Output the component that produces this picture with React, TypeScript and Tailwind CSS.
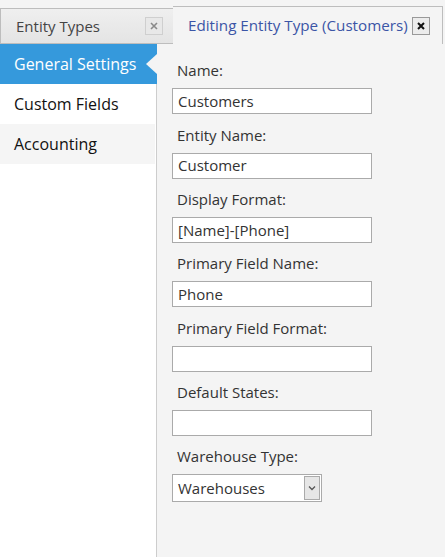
import React from 'react';

const fields = [
  { label: 'Name:', value: 'Customers' },
  { label: 'Entity Name:', value: 'Customer' },
  { label: 'Display Format:', value: '[Name]-[Phone]' },
  { label: 'Primary Field Name:', value: 'Phone' },
  { label: 'Primary Field Format:', value: '' },
  { label: 'Default States:', value: '' },
];

const menu = ['General Settings', 'Custom Fields', 'Accounting'];

function CloseBox({ active }: { active?: boolean }) {
  return (
    <div
      className={`w-[18px] h-[18px] flex items-center justify-center border ${
        active ? 'border-[#999] bg-[#ececec]' : 'border-[#cfcfcf] bg-[#e8e8e8]'
      }`}
    >
      <svg width="8" height="8" viewBox="0 0 8 8">
        <path
          d="M1 1 L7 7 M7 1 L1 7"
          stroke={active ? '#111' : '#8a8a8a'}
          strokeWidth={active ? 2 : 1.6}
        />
      </svg>
    </div>
  );
}

export default function App() {
  return (
    <div className="w-[445px] h-[557px] bg-[#f4f4f4] flex flex-col overflow-hidden font-['Open_Sans',sans-serif] text-[#333]">
      {/* tab strip */}
      <div className="h-[44px] flex items-end shrink-0">
        <div className="w-[174px] h-[36px] border border-[#bdbdbd] bg-gradient-to-b from-[#efefef] to-[#e4e4e4] flex items-center pl-[15px] pr-[10px]">
          <span className="text-[15px] text-[#444] flex-1 pt-px">Entity Types</span>
          <CloseBox />
        </div>
        <div className="w-[270px] h-[38px] border-t border-r border-[#bdbdbd] bg-[#f4f4f4] flex items-center pl-[15px] pr-[12px] -ml-px">
          <span className="text-[15.2px] text-[#3b55a6] flex-1 whitespace-nowrap">Editing Entity Type (Customers)</span>
          <CloseBox active />
        </div>
      </div>

      <div className="flex flex-1">
        {/* left menu */}
        <div className="w-[157px] bg-white border-r border-[#cdcdcd]">
          {menu.map((m, i) => (
            <div
              key={m}
              className={`relative h-[40px] flex items-center pl-[14px] text-[16px] ${
                i === 0
                  ? 'bg-[#3599dc] text-white -mr-px'
                  : i === 2
                  ? 'bg-[#f5f5f5] text-[#111] mr-px'
                  : 'bg-white text-[#111]'
              }`}
            >
              {m}
              {i === 0 && (
                <div className="absolute right-0 top-1/2 -translate-y-1/2 w-0 h-0 border-y-[10px] border-y-transparent border-r-[11px] border-r-[#f4f4f4]" />
              )}
            </div>
          ))}
        </div>

        {/* form */}
        <div className="flex-1 pl-[15px] pt-[6px]">
          {fields.map((f) => (
            <div key={f.label}>
              <div className="pl-[5px] pt-[10.33px] pb-[8px] leading-[20px] text-[15px] text-[#333]">{f.label}</div>
              <div className="w-[200px] h-[26px] bg-white border border-[#aaa] flex items-center px-[5px] text-[15px] text-[#333]">
                {f.value}
              </div>
            </div>
          ))}
          <div className="pl-[5px] pt-[10.33px] pb-[8px] leading-[20px] text-[15px] text-[#333]">Warehouse Type:</div>
          <div className="w-[150px] h-[28px] bg-white border border-[#aaa] flex items-center pl-[5px] pr-px">
            <span className="flex-1 text-[15px] text-[#333]">Warehouses</span>
            <div className="w-[16px] h-[24px] bg-[#e6e6e6] border border-[#aaa] flex items-center justify-center">
              <svg width="8" height="6" viewBox="0 0 8 6">
                <path d="M1 1.5 L4 4.5 L7 1.5" stroke="#555" strokeWidth="1.3" fill="none" />
              </svg>
            </div>
          </div>
        </div>
      </div>
    </div>
  );
}
